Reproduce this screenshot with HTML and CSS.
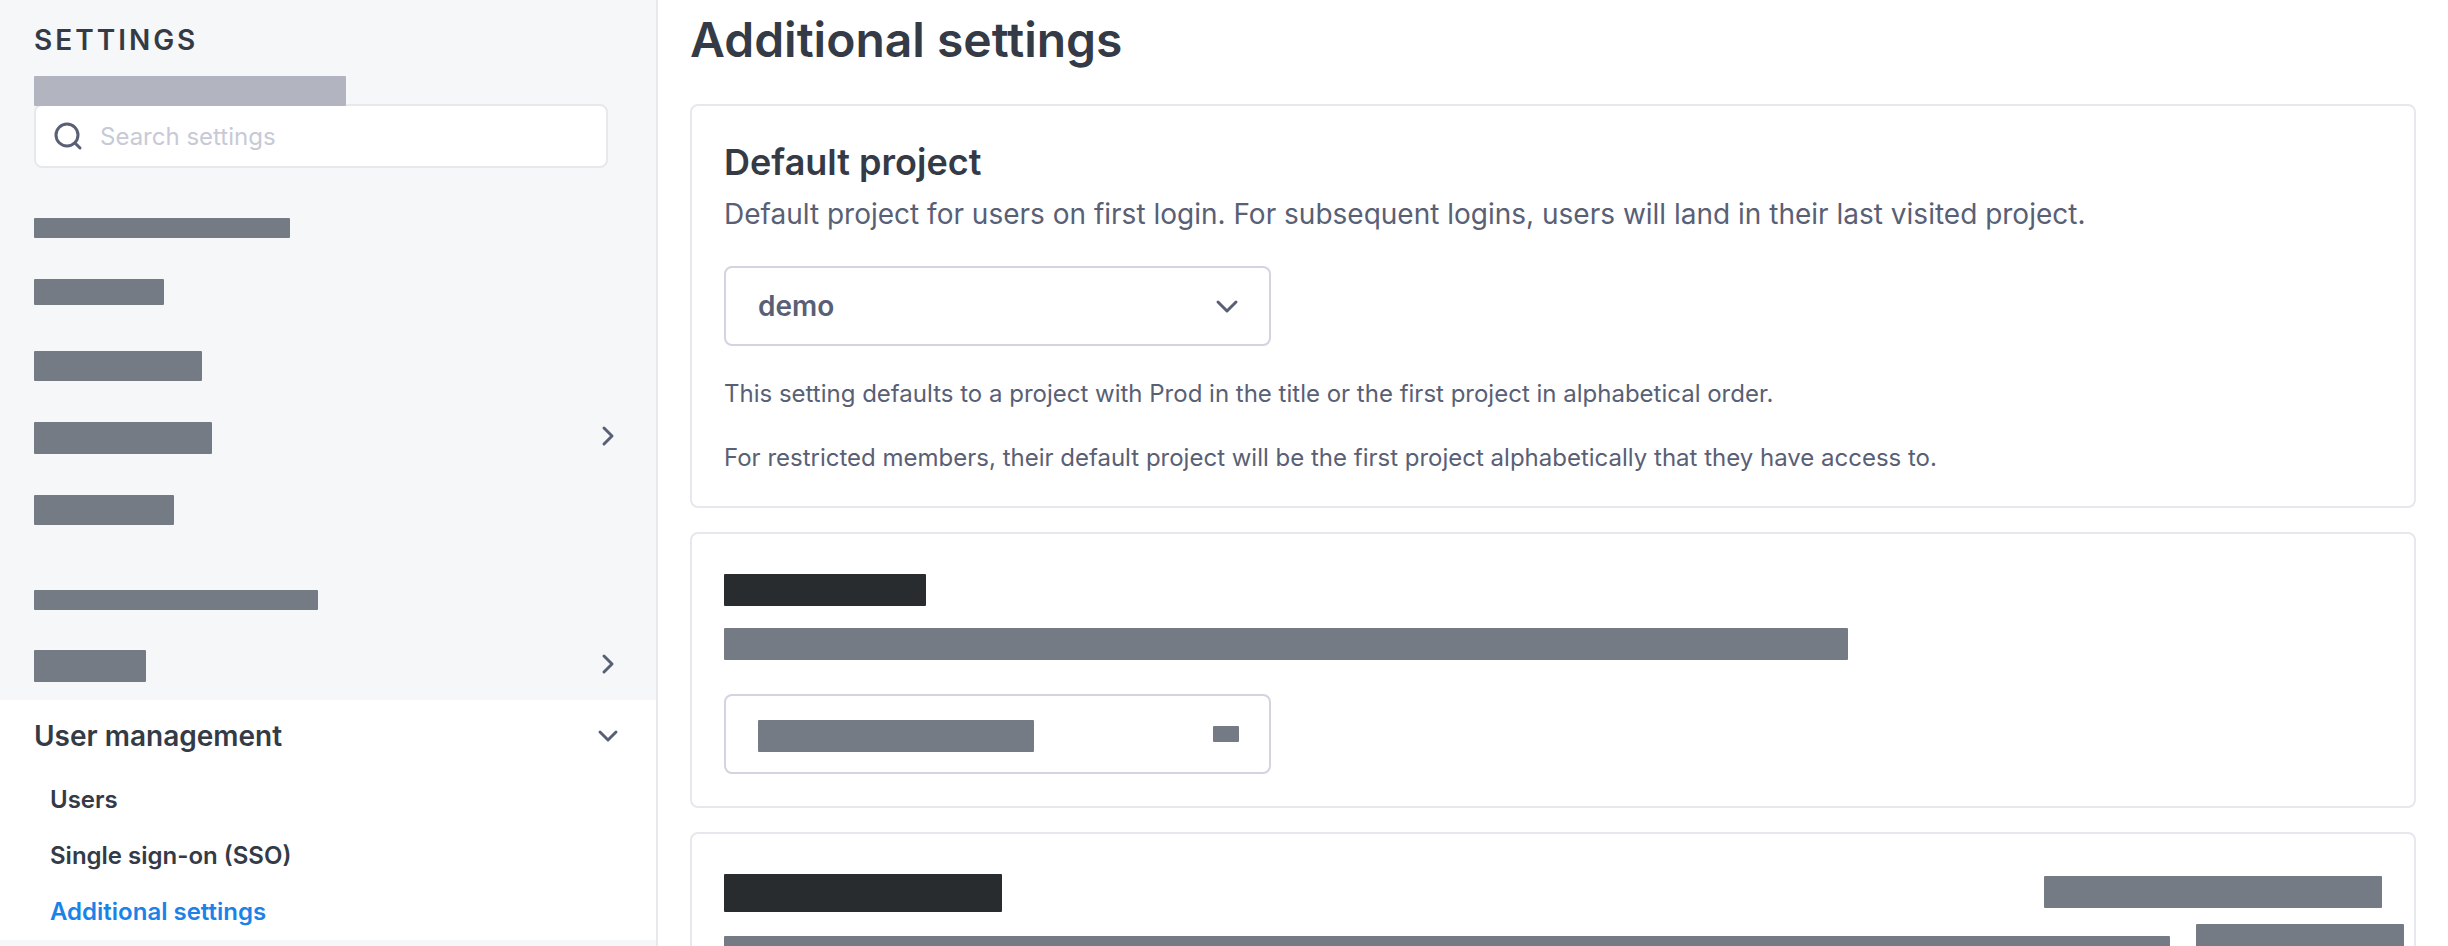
FILE: index.html
```html
<!DOCTYPE html>
<html lang="en">
<head>
  <meta charset="UTF-8">
  <title>Additional settings</title>
  <meta name="viewport" content="width=device-width, initial-scale=1.0">
  <link rel="stylesheet" href="styles.css">
</head>
<body>
  <div class="layout">
    <!-- Sidebar -->
    <aside class="sidebar">
      <div class="sidebar-top">
        <h2 class="sidebar-title">SETTINGS</h2>
        <div class="bar bar-light account-bar"></div>
        <label class="search">
          <svg class="search-icon" viewBox="0 0 32 32" aria-hidden="true">
            <circle cx="15" cy="15" r="11" />
            <path d="M23 23 L28 28" />
          </svg>
          <input type="search" placeholder="Search settings" aria-label="Search settings">
        </label>
      </div>

      <nav class="menu">
        <div class="menu-heading"><div class="bar bar-xs w-256"></div></div>
        <div class="menu-row"><div class="bar bar-s w-130"></div></div>
        <div class="menu-row"><div class="bar bar-m w-168"></div></div>
        <button class="menu-row" type="button" aria-label="Expand group">
          <span class="bar bar-l w-178"></span>
          <svg class="chevron" viewBox="0 0 24 24" aria-hidden="true"><path d="M8 4 L16 12 L8 20" /></svg>
        </button>
        <div class="menu-row"><div class="bar bar-m w-140"></div></div>

        <div class="menu-heading"><div class="bar bar-xs w-284"></div></div>
        <button class="menu-row" type="button" aria-label="Expand group">
          <span class="bar bar-l w-112"></span>
          <svg class="chevron" viewBox="0 0 24 24" aria-hidden="true"><path d="M8 4 L16 12 L8 20" /></svg>
        </button>

        <div class="menu-open">
          <button class="menu-row" type="button" aria-expanded="true">
            <span>User management</span>
            <svg class="chevron" viewBox="0 0 24 24" aria-hidden="true"><path d="M4 8 L12 16 L20 8" /></svg>
          </button>
          <a class="menu-link" href="#users">Users</a>
          <a class="menu-link" href="#sso">Single sign-on (SSO)</a>
          <a class="menu-link active" href="#additional">Additional settings</a>
        </div>
      </nav>
    </aside>

    <!-- Content -->
    <main class="content">
      <h1>Additional settings</h1>

      <section class="card">
        <h2 class="card-title" id="project-label">Default project</h2>
        <p class="card-text">Default project for users on first login. For subsequent logins, users will land in their last visited project.</p>
        <div class="select-box">
          <select aria-labelledby="project-label">
            <option selected>demo</option>
          </select>
          <svg class="chevron select-chevron" viewBox="0 0 24 24" aria-hidden="true"><path d="M3 8 L12 17 L21 8" /></svg>
        </div>
        <p class="card-note">This setting defaults to a project with Prod in the title or the first project in alphabetical order.</p>
        <p class="card-note">For restricted members, their default project will be the first project alphabetically that they have access to.</p>
      </section>

      <section class="card card-bars">
        <div class="bar bar-dark bar-l w-202"></div>
        <div class="bar bar-l w-1124"></div>
        <button class="picker" type="button" aria-label="Choose an option">
          <span class="bar bar-l w-276"></span>
          <span class="bar picker-mark"></span>
        </button>
      </section>

      <section class="card card-split">
        <div class="split-main">
          <div class="bar bar-dark bar-xl w-278"></div>
          <div class="bar bar-l"></div>
        </div>
        <div class="split-side">
          <div class="bar bar-l"></div>
          <div class="bar bar-l side-button"></div>
        </div>
      </section>
    </main>
  </div>
</body>
</html>
```
FILE: styles.css
```css
* {
  box-sizing: border-box;
}
body {
  margin: 0;
  background: #fff;
  color: #343a46;
  font-family: 'Inter', sans-serif;
  font-size: 24px;
}
h1, h2, p {
  margin: 0;
}
button, input, select {
  font: inherit;
  color: inherit;
}

.layout {
  display: flex;
  height: 100vh;
  overflow: hidden;
}

/* Placeholder bars */
.bar {
  display: block;
  max-width: 100%;
  background: #747b85;
  border-radius: 1px;
}
.bar-light { background: #b2b5bf; }
.bar-dark { background: #282c2f; }
.bar-xs { height: 20px; }
.bar-s { height: 26px; }
.bar-m { height: 30px; }
.bar-l { height: 32px; }
.bar-xl { height: 38px; }

.w-112 { width: 112px; }
.w-130 { width: 130px; }
.w-140 { width: 140px; }
.w-168 { width: 168px; }
.w-178 { width: 178px; }
.w-202 { width: 202px; }
.w-256 { width: 256px; }
.w-276 { width: 276px; }
.w-278 { width: 278px; }
.w-284 { width: 284px; }
.w-1124 { width: 1124px; }

/* Sidebar */
.sidebar {
  flex: 0 0 658px;
  background: #f6f7f9;
  border-right: 2px solid #e7e8ec;
}
.sidebar-top {
  padding: 20px 48px 0 34px;
}
.sidebar-title {
  font-size: 28px;
  line-height: 40px;
  font-weight: 600;
  letter-spacing: 3px;
}
.account-bar {
  position: relative;
  width: 312px;
  height: 30px;
  margin-top: 16px;
}
.search {
  display: flex;
  align-items: center;
  gap: 16px;
  height: 64px;
  margin-top: -2px;
  padding: 0 16px;
  background: #fff;
  border: 2px solid #e7e8ec;
  border-radius: 8px;
}
.search input {
  flex: 1;
  min-width: 0;
  padding: 0;
  border: none;
  outline: none;
  background: none;
}
.search input::placeholder {
  color: #c7cad6;
  opacity: 1;
}
.search-icon {
  width: 32px;
  height: 32px;
}
.search-icon, .chevron {
  flex: none;
  fill: none;
  stroke: #596075;
  stroke-width: 3;
  stroke-linecap: round;
  stroke-linejoin: round;
}
.chevron {
  width: 24px;
  height: 24px;
}

.menu {
  padding-top: 32px;
}
.menu-heading {
  display: flex;
  align-items: center;
  height: 56px;
  padding-left: 34px;
}
.menu-row + .menu-heading {
  margin-top: 28px;
}
.menu-row {
  display: flex;
  align-items: center;
  justify-content: space-between;
  width: 100%;
  height: 72px;
  padding: 0 36px 0 34px;
  border: none;
  background: none;
  font-size: 28px;
  font-weight: 600;
  cursor: pointer;
}
.menu-row .bar-m,
.menu-row .bar-l,
.picker .bar-l {
  margin-top: 4px;
}
.menu-open {
  background: #fff;
}
.menu-link {
  display: block;
  padding-left: 50px;
  line-height: 56px;
  font-weight: 600;
  color: inherit;
  text-decoration: none;
}
.menu-link.active {
  color: #1b82e8;
}

/* Content */
.content {
  flex: 1;
  min-width: 0;
  padding: 8px 32px 0;
}
h1 {
  margin-bottom: 32px;
  font-size: 48px;
  line-height: 64px;
  font-weight: 600;
}
.card {
  margin-bottom: 24px;
  padding: 32px;
  border: 2px solid #e7e8ee;
  border-radius: 8px;
}
.card-title {
  margin-bottom: 4px;
  font-size: 36px;
  line-height: 48px;
  font-weight: 600;
}
.card-text {
  margin-bottom: 28px;
  color: #596075;
  font-size: 28px;
  line-height: 48px;
}
.card-note {
  margin-top: 32px;
  color: #596075;
  line-height: 32px;
}
.select-box {
  position: relative;
  width: 547px;
  max-width: 100%;
}
.select-box select {
  display: block;
  width: 100%;
  height: 80px;
  padding: 0 80px 0 32px;
  appearance: none;
  background: #fff;
  border: 2px solid #d2d4e0;
  border-radius: 8px;
  color: #596075;
  font-size: 28px;
  font-weight: 600;
}
/* sits over the select */
.select-chevron {
  position: absolute;
  top: 28px;
  right: 32px;
  pointer-events: none;
}

.card-bars {
  display: flex;
  flex-direction: column;
  padding-top: 40px;
}
.card-bars .w-1124 {
  margin: 22px 0 34px;
}
.picker {
  display: flex;
  align-items: center;
  justify-content: space-between;
  width: 547px;
  max-width: 100%;
  height: 80px;
  padding: 0 30px 0 32px;
  background: #fff;
  border: 2px solid #d2d4e0;
  border-radius: 8px;
}
.picker-mark {
  width: 26px;
  height: 16px;
}

.card-split {
  display: flex;
  gap: 26px;
  padding-top: 40px;
}
.split-main, .split-side {
  display: flex;
  flex-direction: column;
  gap: 24px;
}
.split-main {
  flex: 1;
}
.split-side {
  align-items: flex-end;
  gap: 16px;
  width: 338px;
  padding-top: 2px;
}
.split-side .bar {
  width: 100%;
}
.split-side .side-button {
  width: 208px;
  margin-right: -22px;
}
/* the lower bar runs on under the side column */
.split-main .bar-l {
  width: calc(100% + 152px);
  max-width: none;
}
```
